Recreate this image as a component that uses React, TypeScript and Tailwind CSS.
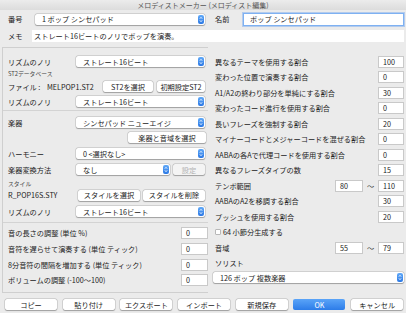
import React from 'react';

function Stepper() {
  return (
    <div className="w-[6px] h-[9px] shrink-0 rounded-[2px] bg-gradient-to-b from-[#62aaf8] to-[#2b78e4] flex flex-col items-center justify-center gap-[1px]">
      <svg width="4" height="2" viewBox="0 0 4 2"><path d="M0.5 1.8 L2 0.4 L3.5 1.8" stroke="white" strokeWidth="0.8" fill="none" /></svg>
      <svg width="4" height="2" viewBox="0 0 4 2"><path d="M0.5 0.2 L2 1.6 L3.5 0.2" stroke="white" strokeWidth="0.8" fill="none" /></svg>
    </div>
  );
}

function Select({ text, className }: { text: string; className: string }) {
  return (
    <div className={`flex items-center h-[11px] bg-white rounded-[2px] shadow-[0_0_0_0.5px_rgba(0,0,0,0.18),0_0.5px_1px_rgba(0,0,0,0.25)] pl-[7px] pr-[1px] ${className}`}>
      <span className="flex-1 whitespace-nowrap text-[7.2px] leading-[10px] text-[#222]">{text}</span>
      <Stepper />
    </div>
  );
}

function Btn({ text, className, disabled }: { text: string; className: string; disabled?: boolean }) {
  return (
    <div
      className={`flex items-center justify-center h-[11px] rounded-[2px] text-[7.2px] leading-[10px] whitespace-nowrap shadow-[0_0_0_0.5px_rgba(0,0,0,0.18),0_0.5px_1px_rgba(0,0,0,0.25)] ${
        disabled ? 'bg-[#f4f4f4] text-[#b3b3b3]' : 'bg-white text-[#222]'
      } ${className}`}
    >
      {text}
    </div>
  );
}

function Field({ value, className }: { value: string; className: string }) {
  return (
    <div className={`flex items-center h-[12px] bg-white border border-[#c9c9c9] pl-[4px] text-[7.2px] leading-[10px] text-[#222] ${className}`}>
      {value}
    </div>
  );
}

function Label({ text, className }: { text: string; className?: string }) {
  return <span className={`text-[7.2px] leading-[10px] text-[#222] whitespace-nowrap ${className ?? ''}`}>{text}</span>;
}

const rightRows = [
  ['異なるテーマを使用する割合', '100'],
  ['変わった位置で演奏する割合', '0'],
  ['A1/A2の終わり部分を単純にする割合', '30'],
  ['変わったコード進行を使用する割合', '0'],
  ['長いフレーズを強制する割合', '20'],
  ['マイナーコードとメジャーコードを混ぜる割合', '0'],
  ['AABAの各Aで代理コードを使用する割合', '0'],
  ['異なるフレーズタイプの数', '15'],
];

const leftBottom = [
  ['音の長さの調整 (単位 %)', '0', 'mt-[4px]'],
  ['音符を遅らせて演奏する (単位 ティック)', '0', 'mt-[4px]'],
  ['8分音符の間隔を増加する (単位 ティック)', '0', 'mt-[4px]'],
  ['ボリュームの調整 (-100〜100)', '0', 'mt-[3px]'],
];

export default function App() {
  return (
    <div className="w-[406px] h-[313px] bg-[#ebebeb] overflow-hidden font-['Noto_Sans_CJK_JP',sans-serif] flex flex-col">
      <div className="h-[10px] shrink-0 bg-gradient-to-b from-[#ececec] to-[#dcdcdc] flex items-center justify-center">
        <span className="text-[7px] leading-[9px] text-[#555]">メロディストメーカー (メロディスト編集)</span>
      </div>

      <div className="mt-[3px] h-[12px] flex items-center pl-[8px]">
        <Label text="番号" className="w-[27px]" />
        <Select text="1 ポップ シンセパッド" className="w-[170px]" />
        <Label text="名前" className="ml-[10px] w-[28px]" />
        <div className="w-[161px] h-[13px] flex items-center bg-white border border-[#7eb1f2] shadow-[0_0_0_1px_rgba(110,165,240,0.45)] pl-[6px] text-[7.2px] leading-[10px] text-[#222]">
          ポップ シンセパッド
        </div>
      </div>

      <div className="mt-[5px] h-[12px] flex items-center pl-[8px]">
        <Label text="メモ" className="w-[24px]" />
        <div className="w-[372px] h-[12px] flex items-center bg-white pl-[2px] text-[7.2px] leading-[10px] text-[#222]">
          ストレート16ビートのノリでポップを演奏。
        </div>
      </div>

      <div className="mt-[5px] h-[246px] flex">
        <div className="ml-[2px] w-[206px] border-l border-t border-b border-[#cfcfcf] flex flex-col">
          <div className="mt-[8px] h-[11px] flex items-center pl-[5px]">
            <Label text="リズムのノリ" className="w-[68px]" />
            <Select text="ストレート16ビート" className="w-[129px]" />
          </div>
          <div className="mt-[2px] h-[9px] flex items-center pl-[5px]">
            <span className="text-[5.8px] leading-[8px] text-[#444]">ST2データベース</span>
          </div>
          <div className="mt-[3px] h-[11px] flex items-center pl-[5px]">
            <Label text="ファイル :" className="w-[39px]" />
            <Label text="MELPOP1.ST2" className="w-[56px]" />
            <Btn text="ST2を選択" className="w-[50px]" />
            <Btn text="初期設定ST2" className="ml-[4px] w-[48px]" />
          </div>
          <div className="mt-[4px] h-[11px] flex items-center pl-[5px]">
            <Label text="リズムのノリ" className="w-[68px]" />
            <Select text="ストレート16ビート" className="w-[129px]" />
          </div>
          <div className="mt-[3px] h-px bg-[#d3d3d3]" />
          <div className="mt-[6px] h-[11px] flex items-center pl-[5px]">
            <Label text="楽器" className="w-[68px]" />
            <Select text="シンセパッド ニューエイジ" className="w-[129px]" />
          </div>
          <div className="mt-[4px] h-[11px] flex items-center justify-end pr-[2px]">
            <Btn text="楽器と音域を選択" className="w-[78px]" />
          </div>
          <div className="mt-[5px] h-[11px] flex items-center pl-[5px]">
            <Label text="ハーモニー" className="w-[68px]" />
            <Select text="0 <選択なし>" className="w-[129px]" />
          </div>
          <div className="mt-[5px] h-[11px] flex items-center pl-[5px]">
            <Label text="楽器変換方法" className="w-[68px]" />
            <Select text="なし" className="w-[94px]" />
            <Btn text="設定" disabled className="ml-[3px] w-[32px]" />
          </div>
          <div className="mt-[4px] h-[9px] flex items-center pl-[5px]">
            <span className="text-[5.8px] leading-[8px] text-[#444]">スタイル</span>
          </div>
          <div className="mt-[2px] h-[10px] flex items-center pl-[5px]">
            <Label text="R_POP16S.STY" className="w-[70px]" />
            <Btn text="スタイルを選択" className="h-[10px] w-[62px]" />
            <Btn text="スタイルを削除" className="ml-[3px] h-[10px] w-[62px]" />
          </div>
          <div className="mt-[6px] h-[11px] flex items-center pl-[5px]">
            <Label text="リズムのノリ" className="w-[68px]" />
            <Select text="ストレート16ビート" className="w-[129px]" />
          </div>
          <div className="mt-[5px] h-px bg-[#d3d3d3]" />
          {leftBottom.map(([label, v, mt]) => (
            <div key={label} className={`${mt} h-[12px] flex items-center pl-[5px]`}>
              <Label text={label} className="flex-1" />
              <Field value={v} className="w-[27px]" />
            </div>
          ))}
        </div>

        <div className="ml-[7px] w-[189px] flex flex-col pt-[7px]">
          {rightRows.map(([label, v]) => (
            <div key={label} className="h-[15.5px] flex items-center">
              <Label text={label} className="flex-1" />
              <Field value={v} className="w-[26px]" />
            </div>
          ))}
          <div className="h-[15.5px] flex items-center">
            <Label text="テンポ範囲" className="flex-1" />
            <Field value="80" className="w-[28px]" />
            <span className="w-[15px] text-center text-[7.2px] leading-[10px] text-[#333]">〜</span>
            <Field value="110" className="w-[26px]" />
          </div>
          <div className="h-[15.5px] flex items-center">
            <Label text="AABAのA2を移調する割合" className="flex-1" />
            <Field value="30" className="w-[26px]" />
          </div>
          <div className="h-[15.5px] flex items-center">
            <Label text="プッシュを使用する割合" className="flex-1" />
            <Field value="20" className="w-[26px]" />
          </div>
          <div className="h-[15.5px] flex items-center">
            <div className="w-[6px] h-[6px] bg-white border border-[#b8b8b8] rounded-[1px]" />
            <Label text="64 小節分生成する" className="ml-[2px]" />
          </div>
          <div className="h-[15.5px] flex items-center">
            <Label text="音域" className="flex-1" />
            <Field value="55" className="w-[28px]" />
            <span className="w-[15px] text-center text-[7.2px] leading-[10px] text-[#333]">〜</span>
            <Field value="79" className="w-[26px]" />
          </div>
          <div className="h-[15.5px] flex items-center">
            <Label text="ソリスト" />
          </div>
          <Select text="126 ポップ 複数楽器" className="mt-[1px] -ml-[2px] w-[191px]" />
        </div>
      </div>

      <div className="mt-[6px] h-[11px] flex items-center pl-[5px] gap-[5.7px]">
        <Btn text="コピー" className="w-[52px]" />
        <Btn text="貼り付け" className="w-[52px]" />
        <Btn text="エクスポート" className="w-[52px]" />
        <Btn text="インポート" className="w-[52px]" />
        <Btn text="新規保存" className="w-[52px]" />
        <div className="w-[52px] h-[11px] rounded-[2px] bg-gradient-to-b from-[#5aa4f8] to-[#2c7ce8] flex items-center justify-center text-[7.2px] leading-[10px] text-white">
          OK
        </div>
        <Btn text="キャンセル" className="w-[52px]" />
      </div>
    </div>
  );
}
